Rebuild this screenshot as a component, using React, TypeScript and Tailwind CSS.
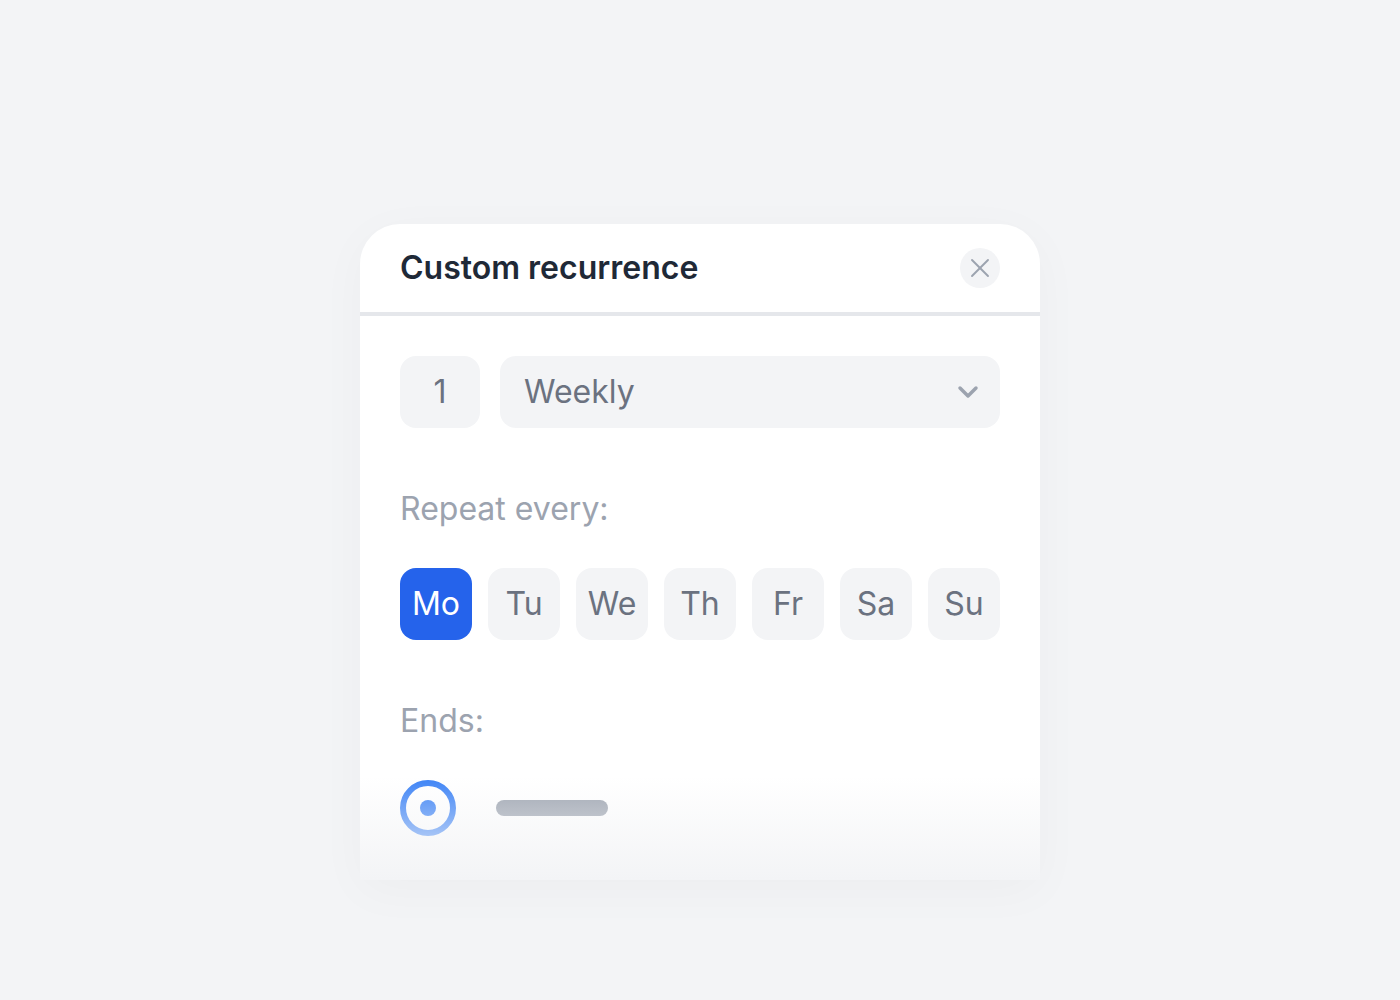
import { X, ChevronDown } from 'lucide-react';

const days = ['Mo', 'Tu', 'We', 'Th', 'Fr', 'Sa', 'Su'];

export default function App() {
  return (
    <div className="min-h-screen w-full bg-[#f3f4f6] font-['Inter',sans-serif]">
      <div className="pt-[224px] flex justify-center">
        <div className="relative w-[680px] h-[656px] bg-white rounded-t-[40px] overflow-hidden shadow-[0_10px_50px_rgba(15,23,42,0.03)]">
          <div className="h-[92px] px-10 flex items-center justify-between border-b-4 border-[#e5e7eb]">
            <h1 className="text-[32px] leading-9 font-semibold text-[#1f2937]">Custom recurrence</h1>
            <button
              type="button"
              className="w-10 h-10 rounded-full bg-[#f3f4f6] flex items-center justify-center text-[#9ca3af]"
              aria-label="Close"
            >
              <X size={32} strokeWidth={1.4} />
            </button>
          </div>

          <div className="px-10 pt-10">
            <div className="flex gap-5 h-[72px]">
              <div className="w-20 rounded-2xl bg-[#f3f4f6] flex items-center justify-center text-[32px] text-[#6b7280]">
                1
              </div>
              <div className="flex-1 rounded-2xl bg-[#f3f4f6] flex items-center justify-between pl-6 pr-4">
                <span className="text-[32px] text-[#6b7280]">Weekly</span>
                <ChevronDown size={32} strokeWidth={2.6} className="text-[#9ca3af]" />
              </div>
            </div>

            <p className="mt-[63px] text-[32px] leading-9 text-[#9ca3af]">Repeat every:</p>

            <div className="mt-[41px] flex gap-4">
              {days.map((d, i) => (
                <button
                  key={d}
                  type="button"
                  className={
                    i === 0
                      ? 'w-[72px] h-[72px] rounded-2xl bg-[#2563eb] text-white text-[32px]'
                      : 'w-[72px] h-[72px] rounded-2xl bg-[#f3f4f6] text-[#6b7280] text-[32px]'
                  }
                >
                  {d}
                </button>
              ))}
            </div>

            <p className="mt-[63px] text-[32px] leading-9 text-[#9ca3af]">Ends:</p>

            <div className="mt-[41px] flex items-center gap-10">
              <div className="w-14 h-14 rounded-full border-[6px] border-[#3b82f6] flex items-center justify-center">
                <div className="w-4 h-4 rounded-full bg-[#3b82f6]" />
              </div>
              <div className="w-28 h-4 rounded-full bg-[#9ca3af]" />
            </div>
          </div>

          <div className="absolute inset-x-0 bottom-0 h-[104px] bg-gradient-to-b from-[#f3f4f6]/0 to-[#f3f4f6]" />
        </div>
      </div>
    </div>
  );
}
